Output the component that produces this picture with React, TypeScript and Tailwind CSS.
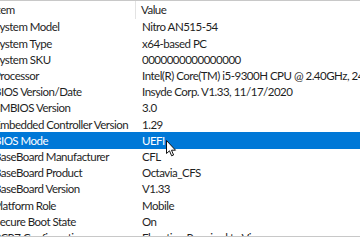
const rows: [string, string][] = [
  ["System Model", "Nitro AN515-54"],
  ["System Type", "x64-based PC"],
  ["System SKU", "0000000000000000"],
  ["Processor", "Intel(R) Core(TM) i5-9300H CPU @ 2.40GHz, 2400 Mhz, 4 Core(s), 8 Logical Processor(s)"],
  ["BIOS Version/Date", "Insyde Corp. V1.33, 11/17/2020"],
  ["SMBIOS Version", "3.0"],
  ["Embedded Controller Version", "1.29"],
  ["BIOS Mode", "UEFI"],
  ["BaseBoard Manufacturer", "CFL"],
  ["BaseBoard Product", "Octavia_CFS"],
  ["BaseBoard Version", "V1.33"],
  ["Platform Role", "Mobile"],
  ["Secure Boot State", "On"],
  ["PCR7 Configuration", "Elevation Required to View"],
];

const Cursor = () => (
  <svg width="11" height="17" viewBox="0 0 11 17" className="absolute left-[166px] top-[140px]">
    <path d="M0.5 0.5 L0.5 13.5 L3.5 10.8 L5.6 15.8 L7.6 15 L5.5 10.2 L9.5 10.2 Z" fill="#fff" stroke="#111" strokeWidth="1" strokeLinejoin="round" />
  </svg>
);

export default function App() {
  return (
    <div className="w-[360px] h-[240px] bg-white overflow-hidden relative" style={{ fontFamily: 'Lato, sans-serif' }}>
      <div className="h-[237px] overflow-hidden border-t border-b border-[#c8c8c8] text-[11.5px] tracking-[-0.5px] text-[#1f1f1f]">
        <div className="flex h-[18px] items-center -ml-[7px]">
          <div className="w-[143px] shrink-0 pl-[1px] border-r border-[#e3e3e3] h-full flex items-center">Item</div>
          <div className="pl-[5px] whitespace-nowrap">Value</div>
        </div>
        {rows.map(([item, value]) => {
          const active = item === "BIOS Mode";
          return (
            <div
              key={item}
              className={`flex h-[16.2px] items-center -ml-[7px] whitespace-nowrap ${active ? "bg-[#0078d7] text-white" : ""}`}
            >
              <div className="w-[143px] shrink-0 pl-[1px]">{item}</div>
              <div className="pl-[6px]">{value}</div>
            </div>
          );
        })}
      </div>
      <Cursor />
    </div>
  );
}
